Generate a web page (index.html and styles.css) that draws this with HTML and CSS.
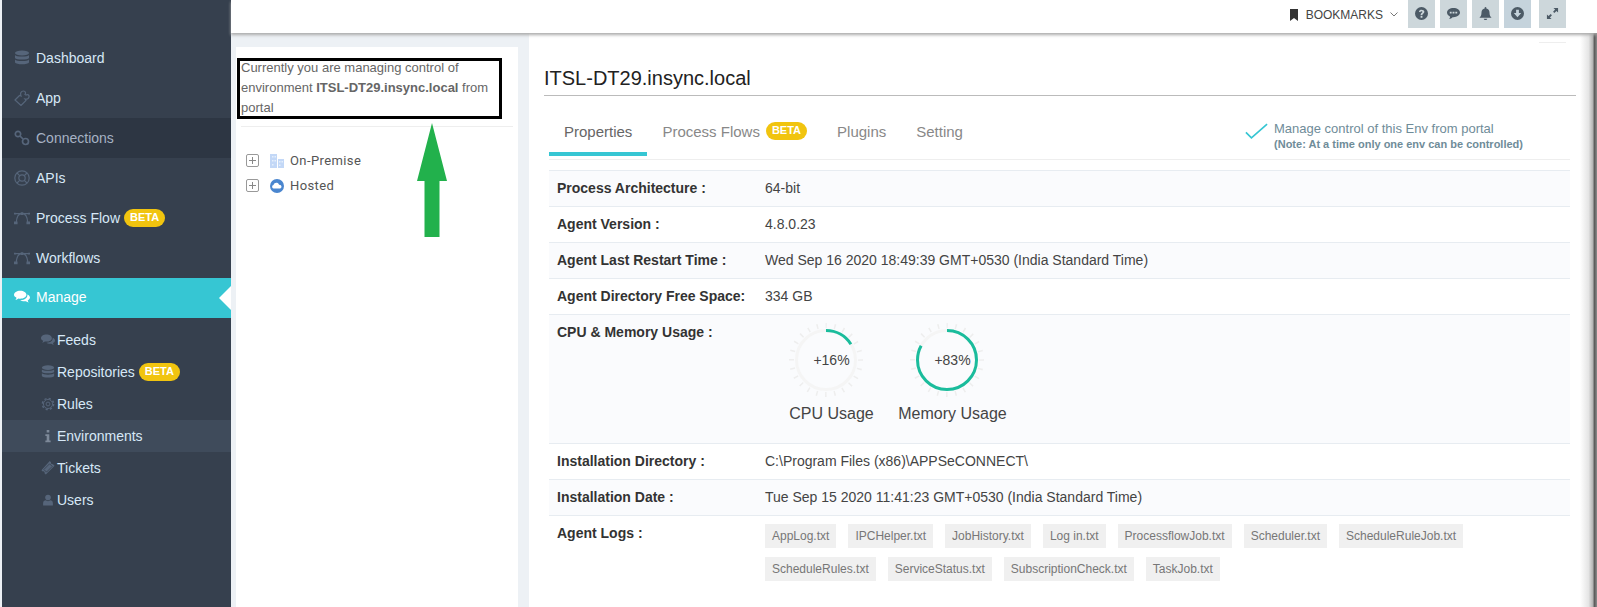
FILE: index.html
```html
<!DOCTYPE html>
<html lang="en">
<head>
  <meta charset="UTF-8">
  <meta name="viewport" content="width=device-width, initial-scale=1.0">
  <title>Environments</title>
  <link rel="stylesheet" href="styles.css">
</head>
<body>

<svg class="sprite" width="0" height="0">
  <symbol id="i-db" viewBox="0 0 16 16"><ellipse cx="8" cy="3" rx="7" ry="2.6"/><path d="M1 5c1 2 13 2 14 0v3c-1 2-13 2-14 0zM1 9.500c1 2 13 2 14 0v3c-1 2.400-13 2.400-14 0z"/></symbol>
  <symbol id="i-puzzle" viewBox="0 0 16 16"><path fill="none" stroke="currentColor" stroke-width="1.200" d="M1 10l4.500-4.500L7 6C6 3.500 7 1 9.500 1c2 0 2.500 2 1.500 3.500l1 .5c1.500-1 3.500 0 3 2-.5 2-2.500 2.500-4 2l1 1.500-5 5z"/></symbol>
  <symbol id="i-link" viewBox="0 0 16 16"><g fill="none" stroke="currentColor" stroke-width="1.700"><circle cx="4" cy="4" r="2.700"/><circle cx="11.500" cy="11.500" r="3"/><path d="M6 6l3 3"/></g></symbol>
  <symbol id="i-ring" viewBox="0 0 16 16"><g fill="none" stroke="currentColor" stroke-width="1.200"><circle cx="8" cy="8" r="7.200"/><circle cx="8" cy="8" r="3.200"/><path d="M3 3l2.700 2.700M13 3l-2.700 2.700M3 13l2.700-2.700M13 13l-2.700-2.700"/></g></symbol>
  <symbol id="i-curve" viewBox="0 0 18 14"><g fill="none" stroke="currentColor" stroke-width="1.300"><path d="M2.500 12C3 5 6 2 9 2s6 3 6.500 10M1 2h16"/></g><path d="M0 11h4v3H0zM14 11h4v3h-4zM7.500 .5h3v3h-3zM0 1h2v2H0zM16 1h2v2h-2z"/></symbol>
  <symbol id="i-comments" viewBox="0 0 18 14"><path d="M7 0c3.900 0 7 2 7 4.600S10.900 9 7 9c-.7 0-1.300 0-2-.2C4 9.700 2.800 10.300 1.500 10.500c.7-.8 1.200-1.700 1.300-2.600C1.100 7.100 0 6 0 4.600 0 2 3.100 0 7 0z"/><path d="M15 4.200c1.800.7 3 2 3 3.500 0 1.300-1 2.500-2.600 3.200.1.800.5 1.600 1.200 2.300-1.200-.2-2.300-.7-3.200-1.500-.6.100-1.200.2-1.800.2-1.900 0-3.600-.6-4.600-1.500 4.500.2 8.600-2 8-6.200z"/></symbol>
  <symbol id="i-gear" viewBox="0 0 16 16"><g fill="none" stroke="currentColor"><circle cx="8" cy="8" r="2.200" stroke-width="1.100"/><circle cx="8" cy="8" r="5.200" stroke-width="1.100"/><circle cx="8" cy="8" r="6.400" stroke-width="1.700" stroke-dasharray="2.500 2.530"/></g></symbol>
  <symbol id="i-info" viewBox="-2 -1 12 16"><path d="M2.500 0h3v3h-3zM1 5h4.500v7H7v2H1v-2h1.500V7H1z"/></symbol>
  <symbol id="i-ticket" viewBox="0 0 16 16"><path d="M10 0l1.500 1.500a1.500 1.500 0 0 0 2 2L15.500 5.500 5.500 15.500 4 14a1.500 1.500 0 0 0-2-2L.5 10.500z"/><path d="M9.800 3.200l3 3-6.500 6.500-3-3z" fill="none" stroke="#36404e" stroke-width=".9"/></symbol>
  <symbol id="i-user" viewBox="-2 -2 18 20"><circle cx="7" cy="4.500" r="4"/><path d="M0 16v-3.500C0 10 2 8.500 3.500 8.500c2 1.500 5 1.500 7 0C12 8.500 14 10 14 12.500V16z"/></symbol>
  <symbol id="i-bookmark" viewBox="0 0 10 12"><path d="M1 0h8v12L5 9l-4 3z"/></symbol>
  <symbol id="i-question" viewBox="0 0 14 14"><path fill-rule="evenodd" d="M7 0a7 7 0 1 1 0 14A7 7 0 0 1 7 0zM6 9.500v2h2v-2zM4.200 5l1.500.6C5.900 5 6.300 4.700 7 4.700c.6 0 1 .3 1 .8 0 .9-2 1-2 3h2c0-1.200 2.100-1.400 2.100-3.300C10.100 4 8.700 3 7 3 5.600 3 4.700 3.700 4.200 5z"/></symbol>
  <symbol id="i-comment" viewBox="0 0 14 12"><path fill-rule="evenodd" d="M7 0c3.900 0 7 2.200 7 5s-3.100 5-7 5h-1c-1 1-2.300 1.700-3.800 1.900.7-.8 1.100-1.500 1.200-2.500C1.500 8.500 0 6.900 0 5c0-2.800 3.100-5 7-5zM3 4v2h2V4zm3 0v2h2V4zm3 0v2h2V4z"/></symbol>
  <symbol id="i-bell" viewBox="0 0 14 15"><path d="M7 0c.6 0 1 .4 1 1v.6c2.200.4 3.600 2.200 3.600 4.400 0 3.500.9 4.900 2.400 6.500H0C1.500 10.900 2.400 9.500 2.400 6c0-2.200 1.400-4 3.600-4.400V1c0-.6.400-1 1-1zM5 13.500h4c0 1-.9 1.500-2 1.500s-2-.5-2-1.500z"/></symbol>
  <symbol id="i-down" viewBox="0 0 14 14"><path fill-rule="evenodd" d="M7 0a7 7 0 1 1 0 14A7 7 0 0 1 7 0zM5.500 3v3.500H3L7 11l4-4.500H8.500V3z"/></symbol>
  <symbol id="i-expand" viewBox="0 0 14 14"><path d="M8 1h5v5l-1.800-1.800-2.200 2.200-1.400-1.400 2.200-2.200zM6 13H1V8l1.800 1.800L5 7.600 6.400 9l-2.200 2.200z"/></symbol>
</svg>

<div class="page">
  <nav class="sidebar">
    <a class="nav-item"><svg class="nav-icon"><use href="#i-db"/></svg>Dashboard</a>
    <a class="nav-item"><svg class="nav-icon"><use href="#i-puzzle"/></svg>App</a>
    <a class="nav-item nav-dark"><svg class="nav-icon"><use href="#i-link"/></svg>Connections</a>
    <a class="nav-item"><svg class="nav-icon"><use href="#i-ring"/></svg>APIs</a>
    <a class="nav-item"><svg class="nav-icon"><use href="#i-curve"/></svg>Process Flow <span class="beta">BETA</span></a>
    <a class="nav-item"><svg class="nav-icon"><use href="#i-curve"/></svg>Workflows</a>
    <a class="nav-item nav-active"><svg class="nav-icon"><use href="#i-comments"/></svg>Manage</a>
    <div class="subnav">
      <a class="sub-item"><svg class="sub-icon"><use href="#i-comments"/></svg>Feeds</a>
      <a class="sub-item"><svg class="sub-icon"><use href="#i-db"/></svg>Repositories <span class="beta">BETA</span></a>
      <a class="sub-item"><svg class="sub-icon"><use href="#i-gear"/></svg>Rules</a>
      <a class="sub-item sub-active"><svg class="sub-icon sub-icon-light"><use href="#i-info"/></svg>Environments</a>
      <a class="sub-item"><svg class="sub-icon"><use href="#i-ticket"/></svg>Tickets</a>
      <a class="sub-item"><svg class="sub-icon"><use href="#i-user"/></svg>Users</a>
    </div>
  </nav>

  <div class="content">
    <header class="topbar">
      <a class="bookmarks"><svg class="bookmark-icon"><use href="#i-bookmark"/></svg>BOOKMARKS
        <svg class="chevron" viewBox="0 0 8 5"><path d="M.5 .5L4 4l3.500-3.500" fill="none" stroke="currentColor"/></svg>
      </a>
      <a class="top-btn"><svg><use href="#i-question"/></svg></a>
      <a class="top-btn"><svg><use href="#i-comment"/></svg></a>
      <a class="top-btn"><svg><use href="#i-bell"/></svg></a>
      <a class="top-btn top-btn-blue"><svg><use href="#i-down"/></svg></a>
      <a class="top-btn top-btn-last"><svg><use href="#i-expand"/></svg></a>
    </header>

    <div class="main">
      <aside class="tree-panel">
        <p class="manage-note">Currently you are managing control of environment <b>ITSL-DT29.insync.local</b> from portal</p>
        <ul class="tree">
          <li>
            <span class="plus"></span>
            <svg class="tree-icon" viewBox="0 0 14 14"><path fill="#c3d8f7" d="M0 0h7v14H0zM8 5h6v9H8z"/><path fill="#e6effc" d="M2 2h1.500v1.500H2zM4.500 2H6v1.500H4.500zM2 6h1.500v1.500H2zM4.500 6H6v1.500H4.500zM9 7h1.500v1.500H9zM11.500 7H13v1.500h-1.500zM2 10h1.500v1.500H2zM9 10.500h1.500V12H9z"/></svg>
            On-Premise
          </li>
          <li>
            <span class="plus"></span>
            <svg class="tree-icon" viewBox="0 0 14 14"><circle cx="7" cy="7" r="7" fill="#4a86cf"/><path fill="#fff" d="M3.500 9.500a1.800 1.800 0 0 1 0-3.500C4 4.300 5.500 3.500 7 3.800c1 .2 1.800 1 2 2 1.500-.1 2.500.8 2.500 1.900s-.9 1.800-2 1.800z"/></svg>
            Hosted
          </li>
        </ul>
      </aside>

      <section class="env-panel">
        <div class="panel-tick"></div>
        <h1 class="env-title">ITSL-DT29.insync.local</h1>

        <div class="tabs-row">
          <a class="tab tab-active">Properties</a>
          <a class="tab">Process Flows <span class="beta">BETA</span></a>
          <a class="tab">Plugins</a>
          <a class="tab">Setting</a>
          <div class="manage-check">
            <svg class="check" viewBox="0 0 25 18"><path d="M1 10l6 6L24 1" fill="none" stroke="#36c6d3" stroke-width="1.800"/></svg>
            <div>
              <div class="check-title">Manage control of this Env from portal</div>
              <div class="check-note">(Note: At a time only one env can be controlled)</div>
            </div>
          </div>
        </div>

        <div class="props">
          <div class="prop stripe"><div class="prop-label">Process Architecture :</div><div class="prop-value">64-bit</div></div>
          <div class="prop"><div class="prop-label">Agent Version :</div><div class="prop-value">4.8.0.23</div></div>
          <div class="prop stripe"><div class="prop-label">Agent Last Restart Time :</div><div class="prop-value">Wed Sep 16 2020 18:49:39 GMT+0530 (India Standard Time)</div></div>
          <div class="prop"><div class="prop-label">Agent Directory Free Space:</div><div class="prop-value">334 GB</div></div>
          <div class="prop prop-usage stripe">
            <div class="prop-label">CPU &amp; Memory Usage :</div>
            <div class="gauges">
              <div class="gauge">
                <svg class="gauge-svg" viewBox="0 0 121 84">
                  <circle class="gauge-ticks" cx="55" cy="42" r="34.500" transform="rotate(-90 55 42)"/>
                  <circle class="gauge-track" cx="55" cy="42" r="29.500"/>
                  <circle class="gauge-arc" cx="55" cy="42" r="29.500" pathLength="100" stroke-dasharray="16 100" transform="rotate(-90 55 42)"/>
                  <text class="gauge-text" x="60.500" y="47">+16%</text>
                </svg>
                <div class="gauge-label">CPU Usage</div>
              </div>
              <div class="gauge">
                <svg class="gauge-svg" viewBox="0 0 121 84">
                  <circle class="gauge-ticks" cx="55" cy="42" r="34.500" transform="rotate(-90 55 42)"/>
                  <circle class="gauge-track" cx="55" cy="42" r="29.500"/>
                  <circle class="gauge-arc" cx="55" cy="42" r="29.500" pathLength="100" stroke-dasharray="83 100" transform="rotate(-90 55 42)"/>
                  <text class="gauge-text" x="60.500" y="47">+83%</text>
                </svg>
                <div class="gauge-label">Memory Usage</div>
              </div>
            </div>
          </div>
          <div class="prop"><div class="prop-label">Installation Directory :</div><div class="prop-value">C:\Program Files (x86)\APPSeCONNECT\</div></div>
          <div class="prop stripe"><div class="prop-label">Installation Date :</div><div class="prop-value">Tue Sep 15 2020 11:41:23 GMT+0530 (India Standard Time)</div></div>
          <div class="prop prop-logs">
            <div class="prop-label">Agent Logs :</div>
            <div class="logs">
              <a class="log">AppLog.txt</a>
              <a class="log">IPCHelper.txt</a>
              <a class="log">JobHistory.txt</a>
              <a class="log">Log in.txt</a>
              <a class="log">ProcessflowJob.txt</a>
              <a class="log">Scheduler.txt</a>
              <a class="log">ScheduleRuleJob.txt</a>
              <a class="log">ScheduleRules.txt</a>
              <a class="log">ServiceStatus.txt</a>
              <a class="log">SubscriptionCheck.txt</a>
              <a class="log">TaskJob.txt</a>
            </div>
          </div>
        </div>
      </section>
    </div>
  </div>

  <!-- annotation drawn on the screenshot -->
  <div class="note-box"></div>
  <svg class="note-arrow" viewBox="0 0 31 115"><path fill="#22b14c" d="M15 0L30 58H22.500V114H7.500V58H0z"/></svg>
  <div class="window-edge"></div>
</div>

</body>
</html>
```

FILE: styles.css
```css
* {
  box-sizing: border-box;
}

html, body {
  margin: 0;
  height: 100%;
  overflow: hidden;
}

body {
  font-family: 'Liberation Sans', Arial, sans-serif;
  font-size: 14px;
  color: #333;
  background-color: #edf1f5;
}

.sprite {
  position: absolute;
}

svg {
  fill: currentColor;
}

.page {
  position: relative;
  display: flex;
  width: 1597px;
  height: 607px;
  padding-left: 2px;
  overflow: hidden;
}

/* sidebar */
.sidebar {
  width: 229px;
  flex: none;
  padding-top: 38px;
  background-color: #36404e;
  color: #d7e8f7;
}

.nav-item {
  display: flex;
  align-items: center;
  height: 40px;
  padding-left: 12px;
}

.nav-icon {
  width: 16px;
  height: 16px;
  margin-right: 6px;
  color: #56657a;
}

.nav-dark {
  background-color: #2d3643;
  color: #a6b2c4;
}

.nav-active {
  position: relative;
  padding-bottom: 2px;
  background-color: #36c6d3;
  color: #fff;
}

.nav-active .nav-icon {
  color: #fff;
}

.nav-active::after {
  content: '';
  position: absolute;
  right: 0;
  top: 8px;
  border-top: 12px solid transparent;
  border-bottom: 12px solid transparent;
  border-right: 12px solid #fff;
}

.beta {
  display: inline-block;
  height: 18px;
  margin-left: 4px;
  padding: 0 6px;
  border-radius: 9px;
  background-color: #f1c40f;
  color: #fff;
  font-size: 11px;
  font-weight: bold;
  line-height: 17px;
}

.subnav {
  padding-top: 6px;
}

.sub-item {
  display: flex;
  align-items: center;
  height: 32px;
  padding-left: 39px;
}

.sub-icon {
  width: 14px;
  height: 14px;
  margin-right: 2px;
  color: #56657a;
}

.sub-icon-light {
  color: #7d8999;
}

.sub-active {
  background-color: #3f4b5b;
}

/* top bar */
.content {
  flex: 1;
  display: flex;
  flex-direction: column;
  min-width: 0;
}

.topbar {
  position: relative;
  z-index: 1;
  display: flex;
  justify-content: flex-end;
  height: 33px;
  padding-right: 31px;
  background-color: #fff;
  box-shadow: 0 2px 3px #aaa;
}

.bookmarks {
  display: flex;
  align-items: center;
  height: 28px;
  margin-right: 5px;
  padding-top: 1px;
  font-size: 12px;
  color: #444;
}

.bookmark-icon {
  width: 10px;
  height: 12px;
  margin-right: 7px;
  color: #333;
}

.chevron {
  width: 8px;
  height: 5px;
  margin-left: 7px;
  color: #777;
}

.top-btn {
  display: flex;
  align-items: center;
  justify-content: center;
  width: 27px;
  height: 28px;
  margin-left: 5px;
  padding-bottom: 2px;
  background-color: #cdd7db;
  color: #4c5a66;
}

.top-btn svg {
  width: 13px;
  height: 13px;
}

.top-btn-blue {
  background-color: #c5d3dc;
}

.top-btn-last {
  margin-left: 8px;
}

/* panels */
.main {
  flex: 1;
  display: flex;
  gap: 11px;
  padding-left: 5px;
  min-height: 0;
}

.tree-panel {
  width: 282px;
  flex: none;
  margin-top: 14px;
  padding: 11px 5px 0;
  background-color: #fff;
}

.manage-note {
  height: 69px;
  margin: 0;
  padding-right: 8px;
  border-bottom: 1px solid #eee;
  font-size: 13px;
  line-height: 20px;
  color: #666;
}

.tree {
  list-style: none;
  margin: 0;
  padding: 21px 0 0 5px;
}

.tree li {
  display: flex;
  align-items: center;
  height: 25px;
  font-family: 'Roboto', sans-serif;
  font-size: 13px;
  letter-spacing: .4px;
  color: #555;
}

.plus {
  position: relative;
  width: 13px;
  height: 13px;
  margin-right: 11px;
  border: 1px solid #999;
  border-radius: 2px;
  background: linear-gradient(#888, #888) center / 7px 1px no-repeat, linear-gradient(#888, #888) center / 1px 7px no-repeat;
}

.tree-icon {
  width: 14px;
  height: 14px;
  margin-right: 6px;
}

.env-panel {
  flex: 1;
  min-width: 0;
  padding: 0 27px 0 15px;
  background-color: #fff;
  position: relative;
}

.panel-tick {
  position: absolute;
  top: 9px;
  right: 31px;
  width: 27px;
  height: 1px;
  background-color: #eee;
}

.env-title {
  height: 63px;
  margin: 0 -6px 0 0;
  padding-top: 33px;
  border-bottom: 1px solid #bbb;
  font-size: 20px;
  font-weight: normal;
  line-height: 24px;
  color: #222;
}

/* tabs */
.tabs-row {
  display: flex;
  align-items: flex-start;
  margin-left: 5px;
  padding-top: 11px;
  padding-bottom: 3px;
  border-bottom: 1px solid #eee;
}

.tab {
  display: flex;
  align-items: center;
  height: 49px;
  padding: 0 15px 1px;
  font-size: 15px;
  color: #888;
}

.tab .beta {
  margin-left: 6px;
}

.tab-active {
  padding-top: 3px;
  padding-bottom: 0;
  border-bottom: 4px solid #36c6d3;
  color: #666;
}

.manage-check {
  display: flex;
  margin-left: auto;
  padding-top: 14px;
  margin-right: 47px;
}

.check {
  width: 23px;
  height: 17px;
  margin: 2px 6px 0 0;
}

.check-title {
  font-size: 13px;
  line-height: 16px;
  color: #6f8c99;
}

.check-note {
  font-size: 11px;
  font-weight: bold;
  line-height: 14px;
  color: #6f8c99;
}

/* properties table */
.props {
  margin: 10px 0 0 5px;
}

.prop {
  display: grid;
  grid-template-columns: 208px 1fr;
  height: 36px;
  padding-left: 8px;
  border-top: 1px solid #e7ecf1;
  line-height: 35px;
  color: #444;
}

.stripe {
  background-color: #fafbfd;
}

.prop-label {
  font-weight: bold;
  color: #333;
}

.prop-usage {
  height: 129px;
}

.gauges {
  display: flex;
  margin: 3px 0 0 6px;
}

.gauge {
  width: 121px;
  text-align: center;
}

.gauge-svg {
  display: block;
  width: 121px;
  height: 84px;
}

.gauge-ticks {
  fill: none;
  stroke: #eee;
  stroke-width: 5;
  stroke-dasharray: 1.5 7.532;
  stroke-dashoffset: .75;
}

.gauge-track {
  fill: none;
  stroke: #f5f5f5;
  stroke-width: 3;
}

.gauge-arc {
  fill: none;
  stroke: #1abc9c;
  stroke-width: 3;
}

.gauge-text {
  font-size: 14px;
  fill: #444;
  text-anchor: middle;
}

.gauge-label {
  margin-top: 1px;
  font-size: 16px;
  line-height: 22px;
  color: #444;
  white-space: nowrap;
}

.prop-logs {
  height: auto;
  padding-bottom: 9px;
}

.logs {
  display: flex;
  flex-wrap: wrap;
  gap: 9px 12px;
  padding-top: 8px;
}

.log {
  height: 24px;
  padding: 0 7px;
  background-color: #f0f0f0;
  font-size: 12px;
  line-height: 25px;
  color: #777;
}

/* annotation and window edge, over everything else */
.note-box {
  position: absolute;
  left: 237px;
  top: 58px;
  width: 265px;
  height: 61px;
  border: 3px solid #000;
}

.note-arrow {
  position: absolute;
  left: 417px;
  top: 123px;
  width: 31px;
  height: 115px;
}

.window-edge {
  position: absolute;
  top: 9px;
  right: 0;
  bottom: 0;
  width: 17px;
  background: linear-gradient(to right, rgba(0,0,0,0) 0, rgba(0,0,0,.1) 50%, rgba(0,0,0,.3) 76%, rgba(0,0,0,.65) 84%, rgba(0,0,0,.45) 100%);
}
```
